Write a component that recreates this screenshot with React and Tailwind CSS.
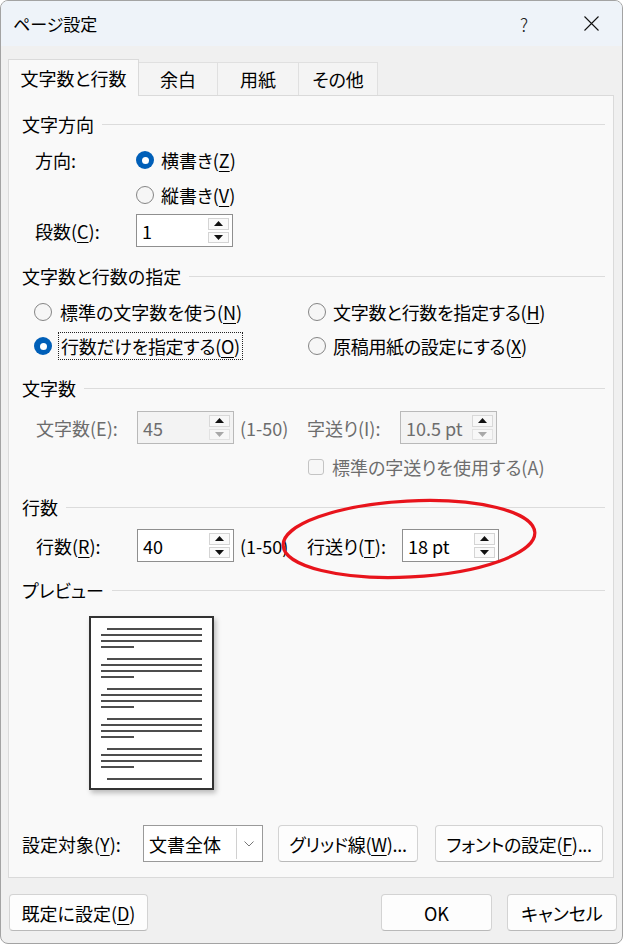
import React from "react";

const U = ({ c }) => (
  <span className="underline underline-offset-[3px] decoration-1">{c}</span>
);

function Radio({ checked }) {
  return checked ? (
    <span className="w-[18px] h-[18px] shrink-0 rounded-full bg-[#005fb8] flex items-center justify-center">
      <span className="w-[7px] h-[7px] rounded-full bg-white" />
    </span>
  ) : (
    <span className="w-[18px] h-[18px] shrink-0 rounded-full border border-[#858585] bg-[#f6f6f6]" />
  );
}

function Heading({ children }) {
  return (
    <div className="h-[20px] flex items-center shrink-0">
      <span>{children}</span>
      <div className="flex-1 h-px bg-[#dcdcdc] ml-[8px]" />
    </div>
  );
}

function Spinner({ value, disabled }) {
  return (
    <div
      className={`flex h-[33px] w-[97px] shrink-0 border ${
        disabled ? "border-[#b9b9b9] bg-[#f3f3f3] text-[#6d6d6d]" : "border-[#8f8f8f] bg-white text-black"
      }`}
    >
      <div className="flex-1 pl-[5px] flex items-center whitespace-nowrap">{value}</div>
      <div className="w-[24px] flex flex-col py-[3px] pr-[3px] gap-[2px]">
        <div className={`flex-1 border ${disabled ? "border-[#d8d8d8] bg-[#f7f7f7]" : "border-[#d4d4d4] bg-[#fafafa]"} flex items-center justify-center`}>
          <svg width="9" height="5" viewBox="0 0 9 5">
            <path d="M0 5 L4.5 0 L9 5Z" fill="#111" />
          </svg>
        </div>
        <div className={`flex-1 border ${disabled ? "border-[#e2e2e2] bg-[#f7f7f7]" : "border-[#d4d4d4] bg-[#fafafa]"} flex items-center justify-center`}>
          <svg width="9" height="5" viewBox="0 0 9 5">
            <path d="M0 0 L4.5 5 L9 0Z" fill={disabled ? "#a8a8a8" : "#111"} />
          </svg>
        </div>
      </div>
    </div>
  );
}

function Btn({ children, className = "" }) {
  return (
    <div
      className={`h-[37px] shrink-0 rounded-[4px] border border-[#d3d3d3] border-b-[#b9b9b9] bg-[#fdfdfd] flex items-center justify-center whitespace-nowrap ${className}`}
    >
      {children}
    </div>
  );
}

function Line({ indent, short }) {
  return (
    <div
      className={`h-[2px] bg-[#4d4d4d] ${indent ? "ml-[6px] w-[95px]" : short ? "w-[33px]" : "w-[101px]"}`}
    />
  );
}

export default function App() {
  return (
    <div className="w-[623px] h-[944px] relative font-['Noto_Sans_CJK_JP','Noto_Sans',sans-serif] [font-feature-settings:'palt'] text-[18px] leading-none text-black">
      <div className="w-full h-full flex flex-col border border-[#a3a3a3] rounded-[8px] overflow-hidden bg-[#f0f0f0]">
        {/* title bar */}
        <div className="h-[45px] shrink-0 bg-[#eef3f9] flex items-center pl-[12px]">
          <span className="text-[17px]">ページ設定</span>
          <span className="ml-auto text-[18px] font-light text-[#222]">?</span>
          <svg className="ml-[56px] mr-[23px]" width="15" height="15" viewBox="0 0 15 15">
            <path d="M0.5 0.5 L14.5 14.5 M14.5 0.5 L0.5 14.5" stroke="#111" strokeWidth="1.1" />
          </svg>
        </div>

        {/* body */}
        <div className="flex-1 flex flex-col pl-[7px] pr-[8px] pt-[13px]">
          {/* tabs */}
          <div className="flex items-end h-[36px] shrink-0">
            <div className="relative z-10 h-[37px] mb-[-1px] w-[131px] bg-[#f9f9f9] border border-b-0 border-[#dadada] flex items-center justify-center">
              文字数と行数
            </div>
            <div className="h-[33px] w-[79px] border border-l-0 border-b-0 border-[#e0e0e0] bg-[#f4f4f4] flex items-center justify-center">
              余白
            </div>
            <div className="h-[33px] w-[81px] border border-l-0 border-b-0 border-[#e0e0e0] bg-[#f4f4f4] flex items-center justify-center">
              用紙
            </div>
            <div className="h-[33px] w-[79px] border border-l-0 border-b-0 border-[#e0e0e0] bg-[#f4f4f4] flex items-center justify-center">
              その他
            </div>
          </div>

          {/* panel */}
          <div className="h-[783px] shrink-0 border border-[#dadada] bg-[#f9f9f9] pt-[18px] pl-[13px] pr-[8px] flex flex-col whitespace-nowrap">
            <Heading>文字方向</Heading>

            <div className="mt-[14px] h-[24px] flex items-center">
              <span className="ml-[13px] w-[101px]">方向:</span>
              <Radio checked />
              <span className="ml-[7px]">
                横書き(<U c="Z" />)
              </span>
            </div>
            <div className="mt-[11px] h-[24px] flex items-center pl-[114px]">
              <Radio />
              <span className="ml-[7px]">
                縦書き(<U c="V" />)
              </span>
            </div>
            <div className="mt-[7px] h-[33px] flex items-center">
              <span className="ml-[13px] w-[101px]">
                段数(<U c="C" />):
              </span>
              <Spinner value="1" />
            </div>

            <div className="mt-[19px]">
              <Heading>文字数と行数の指定</Heading>
            </div>
            <div className="mt-[14px] h-[24px] flex items-center">
              <div className="ml-[12px] w-[274px] flex items-center">
                <Radio />
                <span className="ml-[8px]">
                  標準の文字数を使う(<U c="N" />)
                </span>
              </div>
              <Radio />
              <span className="ml-[7px] tracking-[-0.3px]">
                文字数と行数を指定する(<U c="H" />)
              </span>
            </div>
            <div className="mt-[8px] h-[28px] flex items-center">
              <div className="ml-[12px] w-[274px] flex items-center">
                <Radio checked />
                <span className="ml-[6px] h-[28px] border border-dotted border-[#222] flex items-center px-[2px] tracking-[-0.3px]">
                  行数だけを指定する(<U c="O" />)
                </span>
              </div>
              <Radio />
              <span className="ml-[7px] tracking-[-0.3px]">
                原稿用紙の設定にする(<U c="X" />)
              </span>
            </div>

            <div className="mt-[18px]">
              <Heading>文字数</Heading>
            </div>
            <div className="mt-[13px] h-[33px] flex items-center text-[#6d6d6d]">
              <span className="ml-[14px] w-[101px]">文字数(E):</span>
              <Spinner value="45" disabled />
              <span className="ml-[6px] w-[67px]">(1-50)</span>
              <span className="w-[93px]">字送り(I):</span>
              <Spinner value="10.5 pt" disabled />
            </div>
            <div className="mt-[11px] h-[24px] flex items-center text-[#6d6d6d]">
              <span className="ml-[286px] w-[16px] h-[16px] rounded-[3px] border border-[#c4c4c4] bg-[#f7f7f7]" />
              <span className="ml-[8px]">標準の字送りを使用する(A)</span>
            </div>

            <div className="mt-[18px]">
              <Heading>行数</Heading>
            </div>
            <div className="mt-[12px] h-[33px] flex items-center">
              <span className="ml-[14px] w-[101px]">
                行数(<U c="R" />):
              </span>
              <Spinner value="40" />
              <span className="ml-[6px] w-[67px]">(1-50)</span>
              <span className="w-[95px]">
                行送り(<U c="T" />):
              </span>
              <Spinner value="18 pt" />
            </div>

            <div className="mt-[18px]">
              <Heading>プレビュー</Heading>
            </div>
            <div className="ml-[67px] mt-[16px] w-[125px] h-[174px] shrink-0 bg-white border-2 border-[#333] shadow-[2px_3px_5px_rgba(0,0,0,0.25)] pt-[10px] pl-[10px] flex flex-col">
              {[0, 1, 2, 3, 4].map((g) => (
                <div key={g} className="flex flex-col gap-[4px] mb-[10px]">
                  <Line indent />
                  <Line />
                  <Line />
                  <Line short />
                </div>
              ))}
              <Line indent />
            </div>

            <div className="mt-[35px] h-[37px] flex items-center">
              <span className="w-[121px]">
                設定対象(<U c="Y" />):
              </span>
              <div className="flex h-[37px] w-[120px] border border-[#9a9a9a] bg-white">
                <div className="flex-1 pl-[5px] flex items-center">文書全体</div>
                <div className="w-[24px] my-[2px] mr-[2px] border-l border-[#d0d0d0] flex items-center justify-center">
                  <svg width="10" height="6" viewBox="0 0 10 6">
                    <path d="M0.5 0.5 L5 5 L9.5 0.5" stroke="#777" strokeWidth="1" fill="none" />
                  </svg>
                </div>
              </div>
              <Btn className="ml-[15px] w-[140px] tracking-[-0.3px]">
                グリッド線(<U c="W" />)...
              </Btn>
              <Btn className="ml-[17px] w-[168px] tracking-[-0.3px]">
                フォントの設定(<U c="F" />)...
              </Btn>
            </div>
          </div>

          {/* footer */}
          <div className="mt-[16px] flex h-[37px] shrink-0">
            <Btn className="ml-[1px] w-[139px]">
              既定に設定(<U c="D" />)
            </Btn>
            <Btn className="ml-[233px] w-[111px] border-[#005fb8] border-b-[#005fb8]">OK</Btn>
            <Btn className="ml-[15px] w-[110px]">キャンセル</Btn>
          </div>
        </div>
      </div>

      {/* red annotation ellipse */}
      <svg className="absolute left-0 top-0 pointer-events-none" width="623" height="944" viewBox="0 0 623 944">
        <ellipse
          cx="409"
          cy="539"
          rx="126"
          ry="38"
          transform="rotate(-3 409 539)"
          fill="none"
          stroke="#e8141c"
          strokeWidth="3.2"
        />
      </svg>
    </div>
  );
}
